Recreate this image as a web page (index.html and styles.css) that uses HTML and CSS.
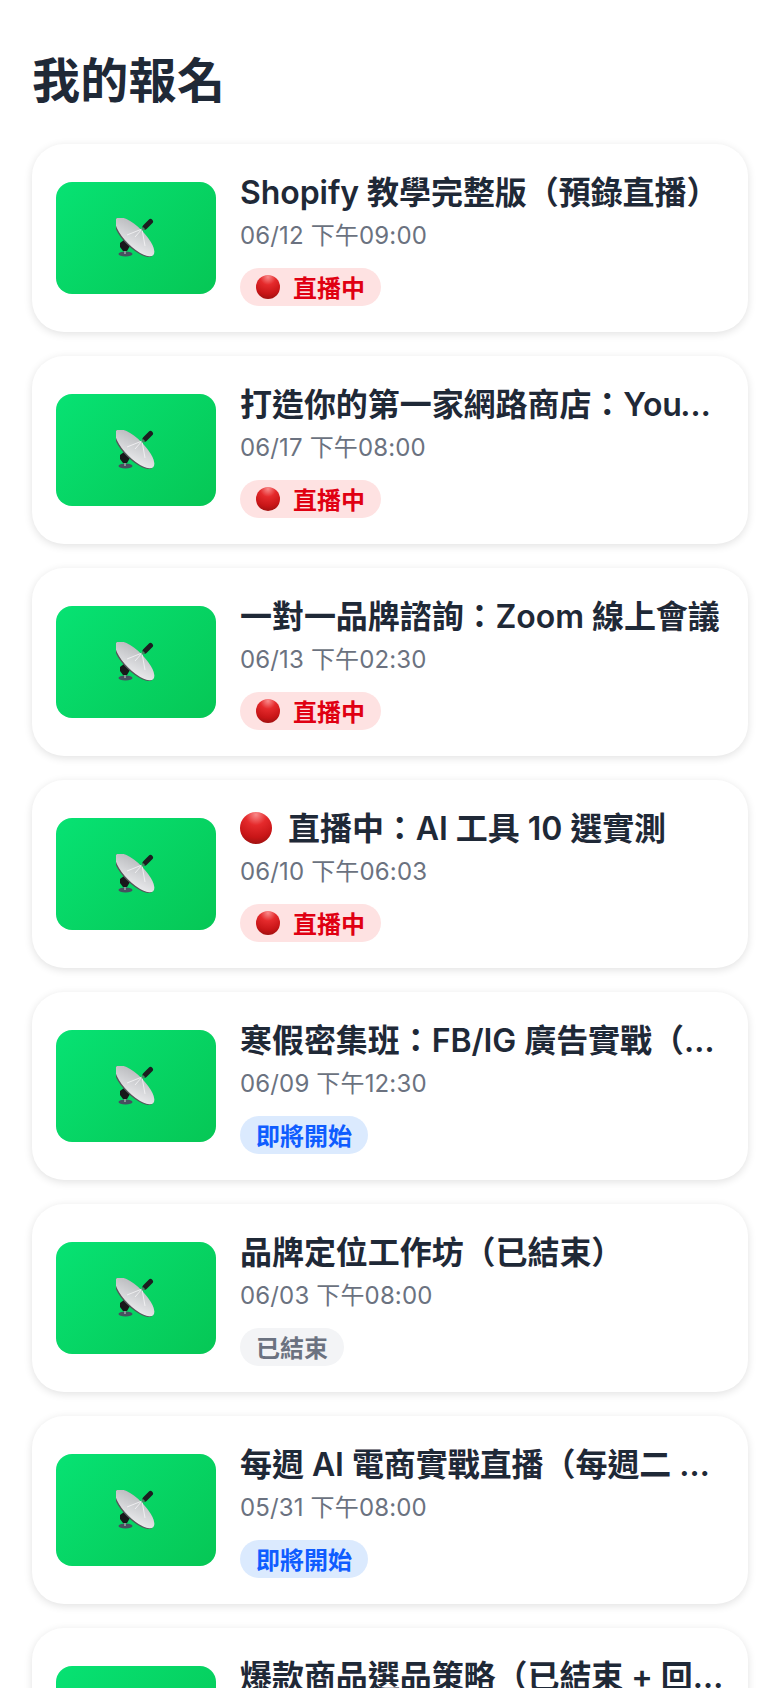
FILE: index.html
```html
<!DOCTYPE html>
<html lang="zh-Hant">
<head>
  <meta charset="UTF-8">
  <meta name="viewport" content="width=device-width, initial-scale=1">
  <title>我的報名</title>
  <link rel="stylesheet" href="styles.css">
</head>
<body>
  <svg class="defs" width="0" height="0" aria-hidden="true">
    <defs>
      <radialGradient id="redBall" cx="50%" cy="8%" r="95%">
        <stop offset="0" stop-color="#f98a8a"/>
        <stop offset="0.35" stop-color="#e52a2c"/>
        <stop offset="0.75" stop-color="#c81517"/>
        <stop offset="1" stop-color="#9c1110"/>
      </radialGradient>
      <linearGradient id="dishFill" x1="0" y1="0" x2="1" y2="1">
        <stop offset="0" stop-color="#b4b5b8"/>
        <stop offset="0.5" stop-color="#d2d3d6"/>
        <stop offset="1" stop-color="#f1f1f3"/>
      </linearGradient>
      <symbol id="ball" viewBox="0 0 24 24">
        <circle cx="12" cy="12" r="12" fill="url(#redBall)"/>
      </symbol>
      <symbol id="antenna" viewBox="0 0 40 40">
        <ellipse cx="9.5" cy="36" rx="7" ry="2.4" fill="#46505f"/>
        <path d="M9 36V30" stroke="#8a8f96" stroke-width="2"/>
        <path d="M4 25l4-3 6 6-3 5H7l-3-4z" fill="#17181a"/>
        <ellipse cx="18" cy="19.3" rx="26" ry="10" transform="rotate(45 18 19.3)" fill="#55565a"/>
        <ellipse cx="18.8" cy="18.8" rx="26" ry="9.4" transform="rotate(45 18.8 18.8)" fill="url(#dishFill)"/>
        <path d="M26 11L11 17M26 11L29 28M26 11L19 19" stroke="#f6f6f7" stroke-width="0.8" fill="none"/>
        <path d="M29 9L34.5 3.5" stroke="#1c1d20" stroke-width="5" stroke-linecap="round"/>
        <path d="M25 11l2-2 2 2-2 2z" fill="#3f8f62"/>
      </symbol>
    </defs>
  </svg>

  <main class="page">
    <h1>我的報名</h1>

    <div class="lista">
      <div class="card">
        <div class="thumb"><svg class="antenna"><use href="#antenna"/></svg></div>
        <div class="info">
          <div class="title">Shopify 教學完整版（預錄直播）</div>
          <div class="date">06/12 下午09:00</div>
          <span class="badge live"><svg class="ball"><use href="#ball"/></svg>直播中</span>
        </div>
      </div>

      <div class="card">
        <div class="thumb"><svg class="antenna"><use href="#antenna"/></svg></div>
        <div class="info">
          <div class="title">打造你的第一家網路商店：YouTube 實作班</div>
          <div class="date">06/17 下午08:00</div>
          <span class="badge live"><svg class="ball"><use href="#ball"/></svg>直播中</span>
        </div>
      </div>

      <div class="card">
        <div class="thumb"><svg class="antenna"><use href="#antenna"/></svg></div>
        <div class="info">
          <div class="title">一對一品牌諮詢：Zoom 線上會議</div>
          <div class="date">06/13 下午02:30</div>
          <span class="badge live"><svg class="ball"><use href="#ball"/></svg>直播中</span>
        </div>
      </div>

      <div class="card">
        <div class="thumb"><svg class="antenna"><use href="#antenna"/></svg></div>
        <div class="info">
          <div class="title"><svg class="ball-big"><use href="#ball"/></svg>直播中：AI 工具 10 選實測</div>
          <div class="date">06/10 下午06:03</div>
          <span class="badge live"><svg class="ball"><use href="#ball"/></svg>直播中</span>
        </div>
      </div>

      <div class="card">
        <div class="thumb"><svg class="antenna"><use href="#antenna"/></svg></div>
        <div class="info">
          <div class="title">寒假密集班：FB/IG 廣告實戰（進階課程）</div>
          <div class="date">06/09 下午12:30</div>
          <span class="badge soon">即將開始</span>
        </div>
      </div>

      <div class="card">
        <div class="thumb"><svg class="antenna"><use href="#antenna"/></svg></div>
        <div class="info">
          <div class="title">品牌定位工作坊（已結束）</div>
          <div class="date">06/03 下午08:00</div>
          <span class="badge ended">已結束</span>
        </div>
      </div>

      <div class="card">
        <div class="thumb"><svg class="antenna"><use href="#antenna"/></svg></div>
        <div class="info">
          <div class="title">每週 AI 電商實戰直播（每週二 晚上八點）</div>
          <div class="date">05/31 下午08:00</div>
          <span class="badge soon">即將開始</span>
        </div>
      </div>

      <div class="card">
        <div class="thumb"><svg class="antenna"><use href="#antenna"/></svg></div>
        <div class="info">
          <div class="title">爆款商品選品策略（已結束 + 回放連結）</div>
          <div class="date">05/20 下午08:00</div>
          <span class="badge ended">已結束</span>
        </div>
      </div>
    </div>
  </main>
</body>
</html>
```

FILE: styles.css
```css
:root {
  --texto: #1f2937;
  --gris: #6b7280;
}

* {
  box-sizing: border-box;
}

html, body {
  height: 1688px;
  overflow: hidden;
}

body {
  margin: 0;
  background: white;
  color: var(--texto);
  font-family: Inter, "Noto Sans CJK TC", sans-serif;
}

.defs {
  position: absolute;
}

.page {
  padding: 48px 32px 0;
}

h1 {
  margin: 0 0 31px;
  font-size: 48px;
  line-height: 65px;
  font-weight: 700;
  letter-spacing: 0.3px;
}

.lista {
  display: flex;
  flex-direction: column;
  gap: 24px;
}

.card {
  display: flex;
  align-items: center;
  gap: 24px;
  height: 188px;
  padding: 24px;
  background: white;
  border-radius: 32px;
  box-shadow: 0 2px 8px rgba(0,0,0,0.12);
}

.thumb {
  flex: 0 0 160px;
  height: 112px;
  display: flex;
  align-items: center;
  justify-content: center;
  border-radius: 16px;
  background: linear-gradient(135deg, #07e273, #06c755);
}

.antenna {
  width: 40px;
  height: 40px;
}

.info {
  flex: 1;
  min-width: 0;
  padding-top: 2px;
}

.title {
  font-size: 32px;
  line-height: 40px;
  font-weight: 600;
  letter-spacing: -0.06px;
  white-space: nowrap;
  overflow: hidden;
  text-overflow: ellipsis;
}

.ball-big {
  width: 32px;
  height: 32px;
  margin-right: 16px;
  vertical-align: -4px;
}

.date {
  margin-top: 7px;
  font-size: 24px;
  line-height: 32px;
  letter-spacing: 0.15px;
  color: var(--gris);
}

.badge {
  display: inline-flex;
  align-items: center;
  height: 38px;
  margin-top: 16px;
  padding: 0 16px;
  border-radius: 19px;
  font-size: 24px;
  font-weight: 600;
}

.ball {
  width: 24px;
  height: 24px;
  margin-right: 13px;
}

.live {
  background: #fee2e2;
  color: #e00012;
}

.soon {
  background: #dbeafe;
  color: #0f5cff;
}

.ended {
  background: #f3f4f6;
  color: var(--gris);
}
```
